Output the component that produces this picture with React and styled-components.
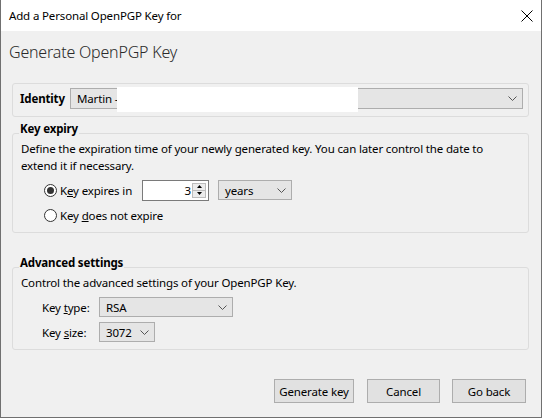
import React from "react";
import styled, { createGlobalStyle } from "styled-components";

const GlobalStyle = createGlobalStyle`
  html, body {
    margin: 0;
    padding: 0;
    background: #f0f0f0;
  }
  body {
    font-family: "Noto Sans", "Open Sans", sans-serif;
    font-size: 11.5px;
    letter-spacing: -0.15px;
    color: #000;
  }
`;

const Window = styled.div`
  width: 542px;
  height: 418px;
  box-sizing: border-box;
  border: 1px solid #707070;
  border-top: none;
  display: flex;
  flex-direction: column;
  background: #f0f0f0;
`;

const TitleBar = styled.div`
  height: 31px;
  flex-shrink: 0;
  background: #fff;
  display: flex;
  align-items: center;
  justify-content: space-between;
  padding: 0 8px 0 8px;
  line-height: 14px;
`;

const Heading = styled.h1`
  margin: 0;
  padding: 10px 8px 0;
  font-size: 16px;
  font-weight: 300;
  letter-spacing: -0.2px;
  line-height: 22px;
  color: #2a2a2a;
`;

const IdentityBox = styled.div`
  margin: 20px 12px 0 11px;
  border: 1px solid #dcdcdc;
  border-radius: 3px;
  padding: 4px 5px 7px 7px;
  display: flex;
  align-items: center;
`;

const BoldLabel = styled.span`
  width: 50px;
  flex-shrink: 0;
  font-weight: 700;
`;

const Group = styled.fieldset`
  margin: ${(p) => p.$top}px 12px 0 11px;
  border: 1px solid #dcdcdc;
  border-radius: 3px;
  padding: 0 0 7px 8px;
  min-width: 0;
`;

const Legend = styled.legend`
  margin-left: -2px;
  padding: 0 1px 8px;
  font-weight: 700;
  line-height: 14px;
`;

const Desc = styled.div`
  margin-top: -4px;
  line-height: 17px;
`;

const RadioRow = styled.div`
  display: flex;
  align-items: center;
  height: ${(p) => p.$h}px;
  margin-top: ${(p) => p.$gap}px;
  padding-left: 23px;
`;

const RadioLabel = styled.label`
  display: flex;
  align-items: center;
  gap: 3px;
  width: ${(p) => p.$w || "auto"};
`;

const RadioCircle = styled.span`
  width: 13px;
  height: 13px;
  box-sizing: border-box;
  border: 1px solid #333;
  border-radius: 50%;
  background: #fff;
  display: flex;
  align-items: center;
  justify-content: center;
  &::after {
    content: "";
    width: 7px;
    height: 7px;
    border-radius: 50%;
    background: ${(p) => (p.$checked ? "#333" : "transparent")};
  }
`;

const NumberBox = styled.div`
  width: 67px;
  height: 21px;
  box-sizing: border-box;
  border: 1px solid #7a7a7a;
  background: #fff;
  display: flex;
  align-items: center;
  justify-content: flex-end;
  padding-right: 2px;
  gap: 1px;
`;

const Spinner = styled.div`
  width: 14px;
  height: 15px;
  display: flex;
  flex-direction: column;
`;

const SpinHalf = styled.div`
  flex: 1;
  box-sizing: border-box;
  border: 1px solid #bcbcbc;
  background: #ececec;
  display: flex;
  align-items: center;
  justify-content: center;
  & + & {
    border-top: none;
  }
`;

const SelectBox = styled.div`
  position: relative;
  width: ${(p) => p.$w}px;
  flex: ${(p) => (p.$grow ? 1 : "none")};
  height: ${(p) => p.$h || 20}px;
  margin-left: ${(p) => p.$ml || 0}px;
  box-sizing: border-box;
  border: 1px solid #adadad;
  background: #e5e5e5;
  display: flex;
  align-items: center;
  justify-content: space-between;
  padding: 0 5px 0 6px;
`;

const Redaction = styled.div`
  position: absolute;
  left: 46px;
  top: -2px;
  width: 241px;
  height: 25px;
  background: #fff;
`;

const FieldRow = styled.div`
  display: flex;
  align-items: center;
  margin-top: ${(p) => p.$gap}px;
  padding-left: 21px;
`;

const FieldLabel = styled.span`
  width: 57px;
  flex-shrink: 0;
`;

const ButtonBar = styled.div`
  margin-top: auto;
  display: flex;
  justify-content: flex-end;
  padding: 0 15px 14px 0;
`;

const Button = styled.button`
  width: ${(p) => p.$w}px;
  height: 24px;
  margin-left: ${(p) => p.$ml || 0}px;
  border: 1px solid #adadad;
  background: #e1e1e1;
  font: inherit;
  letter-spacing: inherit;
  color: #000;
  padding: 0;
`;

const Chevron = () => (
  <svg width="9" height="5" viewBox="0 0 9 5">
    <polyline points="0.5,0.5 4.5,4.5 8.5,0.5" fill="none" stroke="#555" strokeWidth="1" />
  </svg>
);

const CloseIcon = () => (
  <svg width="12" height="12" viewBox="0 0 12 12">
    <path d="M0.5 0.5 L11.5 11.5 M11.5 0.5 L0.5 11.5" stroke="#000" strokeWidth="1" />
  </svg>
);

const Select = ({ w, h, grow, ml, children, redact }) => (
  <SelectBox $w={w} $h={h} $grow={grow} $ml={ml}>
    <span>{children}</span>
    <Chevron />
    {redact && <Redaction />}
  </SelectBox>
);

export default function App() {
  return (
    <>
      <GlobalStyle />
      <Window>
        <TitleBar>
          <span>Add a Personal OpenPGP Key for</span>
          <CloseIcon />
        </TitleBar>
        <Heading>Generate OpenPGP Key</Heading>

        <IdentityBox>
          <BoldLabel>Identity</BoldLabel>
          <Select grow h={21} redact>
            Martin -
          </Select>
        </IdentityBox>

        <Group $top={5}>
          <Legend>Key expiry</Legend>
          <Desc>
            Define the expiration time of your newly generated key. You can later control the date to
            <br />
            extend it if necessary.
          </Desc>
          <RadioRow $h={22} $gap={5}>
            <RadioLabel $w="98px">
              <RadioCircle $checked />
              <span>
                K<u>e</u>y expires in
              </span>
            </RadioLabel>
            <NumberBox>
              <span>3</span>
              <Spinner>
                <SpinHalf>
                  <svg width="5" height="3" viewBox="0 0 5 3">
                    <polygon points="2.5,0 5,3 0,3" fill="#000" />
                  </svg>
                </SpinHalf>
                <SpinHalf>
                  <svg width="5" height="3" viewBox="0 0 5 3">
                    <polygon points="0,0 5,0 2.5,3" fill="#000" />
                  </svg>
                </SpinHalf>
              </Spinner>
            </NumberBox>
            <Select w={74} ml={9}>
              years
            </Select>
          </RadioRow>
          <RadioRow $h={20} $gap={4}>
            <RadioLabel>
              <RadioCircle />
              <span>
                Key <u>d</u>oes not expire
              </span>
            </RadioLabel>
          </RadioRow>
        </Group>

        <Group $top={23}>
          <Legend>Advanced settings</Legend>
          <Desc>Control the advanced settings of your OpenPGP Key.</Desc>
          <FieldRow $gap={6}>
            <FieldLabel>
              Key <u>t</u>ype:
            </FieldLabel>
            <Select w={134}>RSA</Select>
          </FieldRow>
          <FieldRow $gap={5}>
            <FieldLabel>
              Key <u>s</u>ize:
            </FieldLabel>
            <Select w={56}>3072</Select>
          </FieldRow>
        </Group>

        <ButtonBar>
          <Button $w={80}>Generate key</Button>
          <Button $w={73} $ml={13}>
            Cancel
          </Button>
          <Button $w={74} $ml={12}>
            Go back
          </Button>
        </ButtonBar>
      </Window>
    </>
  );
}
